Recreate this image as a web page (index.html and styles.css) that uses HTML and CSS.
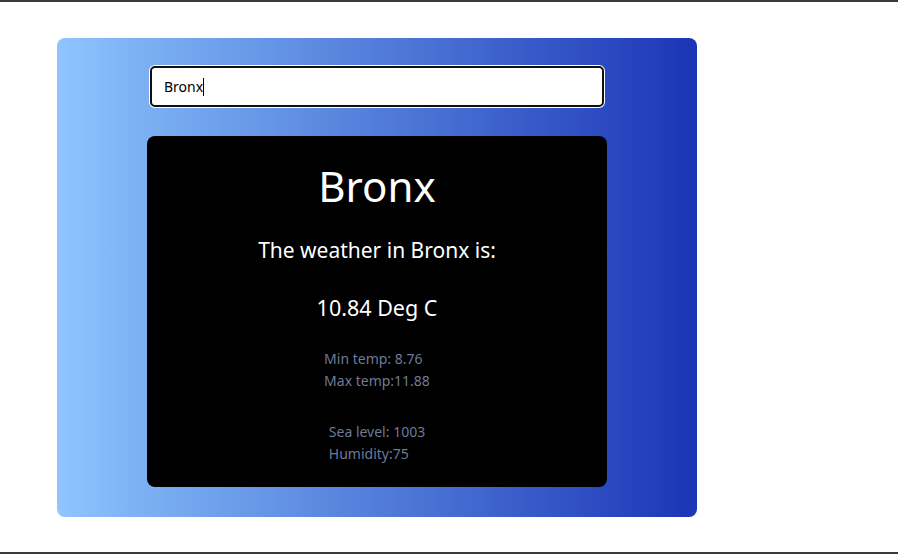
FILE: index.html
```html
<!DOCTYPE html>
<html>
<head>
<meta charset="utf-8">
<link rel="stylesheet" href="styles.css">
</head>
<body>
<div class="page">
  <div class="app">
    <div class="search">
      <span class="typed">Bronx</span><span class="caret"></span>
    </div>
    <div class="weather">
      <h1 class="city">Bronx</h1>
      <p class="intro">The weather in Bronx is:</p>
      <p class="temp">10.84 Deg C</p>
      <div class="details">
        <div class="detail-block">
          <div>Min temp: 8.76</div>
          <div>Max temp:11.88</div>
        </div>
      </div>
      <div class="details second">
        <div class="detail-block">
          <div>Sea level: 1003</div>
          <div>Humidity:75</div>
        </div>
      </div>
    </div>
  </div>
</div>
</body>
</html>
```
FILE: styles.css
```css
* { box-sizing: border-box; }
html, body { margin: 0; padding: 0; background: #fff; }
body { font-family: "Noto Sans", "Open Sans", sans-serif; }
.page {
  width: 898px;
  height: 554px;
  border-top: 2px solid #3c3c3c;
  border-bottom: 2px solid #3c3c3c;
  padding: 36px 0 0 57px;
}
.app {
  width: 640px;
  height: 479px;
  border-radius: 8px;
  background: linear-gradient(to right, #8fc6fe 0%, #7db3f5 12%, #1b35b6 100%);
  padding: 28px 0 0 93px;
}
.search {
  width: 454px;
  height: 41px;
  background: #fff;
  border: 2px solid #101010;
  border-radius: 5px;
  box-shadow: 0 0 0 1px #fff;
  display: flex;
  align-items: center;
  padding-left: 12px;
  font-size: 14px;
  color: #000;
}
.caret {
  display: inline-block;
  width: 1px;
  height: 18px;
  background: #000;
}
.weather {
  margin: 29px 0 0 -3px;
  width: 460px;
  height: 351px;
  background: #000;
  border-radius: 8px;
  color: #fff;
  text-align: center;
  padding-top: 20px;
}
.city {
  margin: 0;
  font-size: 42px;
  font-weight: 400;
  line-height: 60px;
}
.intro {
  margin: 19px 0 0;
  font-size: 21px;
  line-height: 30px;
}
.temp {
  margin: 28px 0 0;
  font-size: 21.5px;
  line-height: 30px;
}
.details {
  margin-top: 25px;
  color: #6d7b98;
  font-size: 14px;
  line-height: 22px;
}
.details.second { margin-top: 29px; }
.detail-block {
  display: inline-block;
  text-align: left;
}
```
